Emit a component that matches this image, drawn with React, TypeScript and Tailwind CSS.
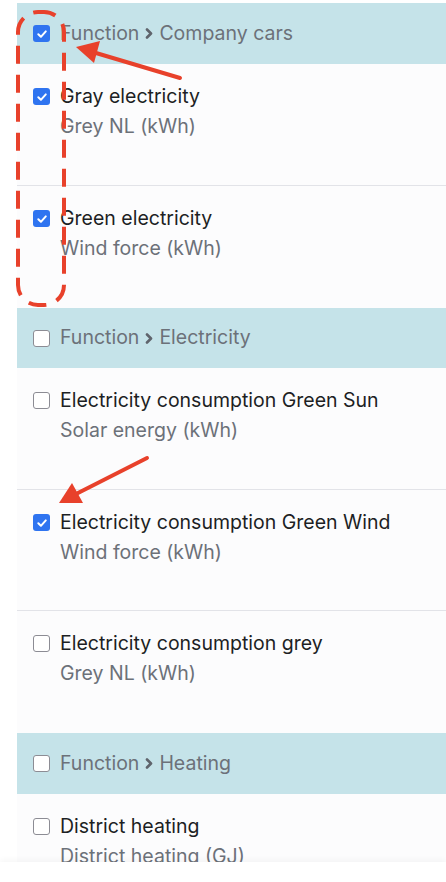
import React from "react";

type Item = { title: string; sub: string; checked: boolean; h?: string };
type Group = { name: string; checked: boolean; h: string; items: Item[] };

const groups: Group[] = [
  {
    name: "Company cars",
    checked: true,
    h: "h-[61px]",
    items: [
      { title: "Gray electricity", sub: "Grey NL (kWh)", checked: true },
      { title: "Green electricity", sub: "Wind force (kWh)", checked: true },
    ],
  },
  {
    name: "Electricity",
    checked: false,
    h: "h-[60px]",
    items: [
      { title: "Electricity consumption Green Sun", sub: "Solar energy (kWh)", checked: false },
      { title: "Electricity consumption Green Wind", sub: "Wind force (kWh)", checked: true, h: "h-[121px]" },
      { title: "Electricity consumption grey", sub: "Grey NL (kWh)", checked: false },
    ],
  },
  {
    name: "Heating",
    checked: false,
    h: "h-[61px]",
    items: [{ title: "District heating", sub: "District heating (GJ)", checked: false }],
  },
];

function Box({ checked }: { checked: boolean }) {
  if (checked) {
    return (
      <div className="w-[17px] h-[17px] rounded-[3px] bg-[#2f74f0] flex items-center justify-center shrink-0">
        <svg width="12" height="12" viewBox="0 0 12 12">
          <path d="M2.3 6.3 L4.9 8.8 L9.8 3.4" fill="none" stroke="white" strokeWidth="2" strokeLinecap="round" strokeLinejoin="round" />
        </svg>
      </div>
    );
  }
  return <div className="w-[17px] h-[17px] rounded-[3px] border-[1.5px] border-[#8c8c94] bg-white shrink-0" />;
}

export default function App() {
  return (
    <div className="relative w-[446px] h-[882px] bg-white overflow-hidden" style={{ fontFamily: "Inter, 'Noto Sans', sans-serif" }}>
      <div className="pt-[3px] pl-[17px]">
        {groups.map((g) => (
          <div key={g.name}>
            <div className={`${g.h} bg-[#c5e3e9] flex items-center pl-[16px] gap-[10px]`}>
              <Box checked={g.checked} />
              <div className="flex items-center text-[19.5px] text-[#6c7179] leading-none">
                <span>Function</span>
                <svg className="mx-[6px]" width="8" height="11" viewBox="0 0 8 11">
                  <path d="M2 1.5 L6 5.5 L2 9.5" fill="none" stroke="#5f646c" strokeWidth="2.6" strokeLinecap="round" strokeLinejoin="round" />
                </svg>
                <span>{g.name}</span>
              </div>
            </div>
            {g.items.map((it, i) => (
              <div key={it.title} className={`${it.h ?? "h-[122px]"} bg-[#fcfcfd] flex items-start pl-[16px] gap-[10px] pt-[20px] ${i < g.items.length - 1 ? "border-b border-[#e2e3e8]" : ""}`}>
                <div className="pt-[4px]">
                  <Box checked={it.checked} />
                </div>
                <div className="flex flex-col">
                  <span className="text-[19.5px] leading-[24px] text-[#1d1f24]">{it.title}</span>
                  <span className="text-[19.5px] leading-[24px] mt-[6px] text-[#6c7179]">{it.sub}</span>
                </div>
              </div>
            ))}
          </div>
        ))}
      </div>
      <div className="absolute left-0 right-0 bottom-0 h-[20px] bg-white shadow-[0_-2px_6px_rgba(0,0,0,0.04)]" />
      <svg className="absolute left-0 top-0 pointer-events-none" width="446" height="882" viewBox="0 0 446 882">
        <rect x="18" y="12" width="46" height="293" rx="20" fill="none" stroke="#e8412b" strokeWidth="4" strokeDasharray="18 11" />
        <line x1="180" y1="78" x2="96" y2="53" stroke="#e8412b" strokeWidth="4" strokeLinecap="round" />
        <polygon points="76,47 100,41 94,63" fill="#e8412b" />
        <line x1="147" y1="458" x2="76" y2="494" stroke="#e8412b" strokeWidth="4" strokeLinecap="round" />
        <polygon points="59,503 72,483 83,503" fill="#e8412b" />
      </svg>
    </div>
  );
}
